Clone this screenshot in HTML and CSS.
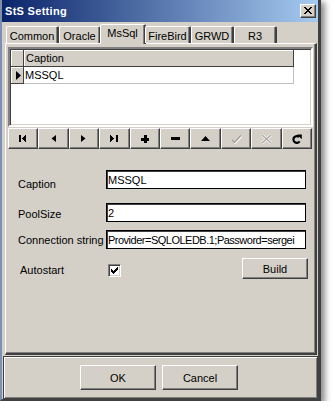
FILE: index.html
```html
<!DOCTYPE html>
<html>
<head>
<meta charset="utf-8">
<link rel="stylesheet" href="styles.css">
</head>
<body>
<div class="window">
  <div class="titlebar">
    <span class="title">StS Setting</span>
    <span class="close"><svg width="8" height="7" viewBox="0 0 8 7" shape-rendering="crispEdges"><path d="M0 0h2v1h-2zM6 0h2v1h-2zM1 1h2v1h-2zM5 1h2v1h-2zM2 2h4v1h-4zM3 3h2v1h-2zM2 4h4v1h-4zM1 5h2v1h-2zM5 5h2v1h-2zM0 6h2v1h-2zM6 6h2v1h-2z" fill="#000"/></svg></span>
  </div>
  <div class="client">
    <div class="tabs">
      <div class="tab t-common">Common</div>
      <div class="tab t-oracle">Oracle</div>
      <div class="tab t-mssql active">MsSql</div>
      <div class="tab t-fire">FireBird</div>
      <div class="tab t-grwd">GRWD</div>
      <div class="tab t-r3">R3</div>
    </div>
    <div class="panel">
      <div class="grid">
        <div class="grow head">
          <div class="ind"></div>
          <div class="cell">Caption</div>
        </div>
        <div class="grow data">
          <div class="ind"><svg width="5" height="9" viewBox="0 0 5 9"><polygon points="0,0 5,4.5 0,9" fill="#000"/></svg></div>
          <div class="cell">MSSQL</div>
        </div>
      </div>
      <div class="nav">
        <div class="nbtn"><svg width="8" height="7" viewBox="0 0 8 7" shape-rendering="crispEdges"><rect x="0" y="0" width="2" height="7"/><polygon points="7,0 7,7 3,3.5"/></svg></div>
        <div class="nbtn"><svg width="5" height="7" viewBox="0 0 5 7"><polygon points="5,0 5,7 0.5,3.5"/></svg></div>
        <div class="nbtn"><svg width="5" height="7" viewBox="0 0 5 7"><polygon points="0,0 0,7 4.5,3.5"/></svg></div>
        <div class="nbtn"><svg width="8" height="7" viewBox="0 0 8 7" shape-rendering="crispEdges"><polygon points="0,0 0,7 4,3.5"/><rect x="6" y="0" width="2" height="7"/></svg></div>
        <div class="nbtn"><svg width="8" height="8" viewBox="0 0 8 8" shape-rendering="crispEdges"><rect x="3" y="0" width="3" height="8"/><rect x="0" y="3" width="9" height="2.5"/></svg></div>
        <div class="nbtn"><svg width="9" height="3" viewBox="0 0 9 3" shape-rendering="crispEdges"><rect x="0" y="0" width="9" height="3"/></svg></div>
        <div class="nbtn"><svg width="9" height="5" viewBox="0 0 9 5"><polygon points="0,5 9,5 4.5,0"/></svg></div>
        <div class="nbtn dis"><svg width="12" height="10" viewBox="0 0 12 10"><path d="M2 6 L4.5 8.5 L11 1.5" fill="none" stroke="#fff" stroke-width="1.2" transform="translate(0.8 0.8)"/><path d="M2 6 L4.5 8.5 L11 1.5" fill="none" stroke="#9c9a94" stroke-width="1.2"/></svg></div>
        <div class="nbtn dis"><svg width="11" height="10" viewBox="0 0 11 10"><path d="M1 1 L10 9 M10 1 L1 9" fill="none" stroke="#fff" stroke-width="2.6"/><path d="M1 1 L10 9 M10 1 L1 9" fill="none" stroke="#a8a59e" stroke-width="1.4"/></svg></div>
        <div class="nbtn"><svg width="10" height="10" viewBox="0 0 10 10"><path d="M7.2 3 A3.4 3.4 0 1 0 7.6 7.4" fill="none" stroke="#000" stroke-width="2.2"/><polygon points="5,0.5 9.8,0.5 9.8,5.3" fill="#000"/></svg></div>
      </div>
      <div class="form">
        <div class="frow r1">
          <label class="lbl">Caption</label>
          <div class="edit">MSSQL</div>
        </div>
        <div class="frow r2">
          <label class="lbl">PoolSize</label>
          <div class="edit">2</div>
        </div>
        <div class="frow r3">
          <label class="lbl">Connection string</label>
          <div class="edit">Provider=SQLOLEDB.1;Password=sergei</div>
        </div>
        <div class="frow r4">
          <label class="lbl">Autostart</label>
          <div class="check"><svg width="7" height="7" viewBox="0 0 7 7" shape-rendering="crispEdges"><path d="M0 2h1v3h-1zM1 3h1v3h-1zM2 4h1v3h-1zM3 3h1v3h-1zM4 2h1v3h-1zM5 1h1v3h-1zM6 0h1v3h-1z" fill="#000"/></svg></div>
          <div class="btn build">Build</div>
        </div>
      </div>
    </div>
    <div class="bottom">
      <div class="btn dlg">OK</div>
      <div class="btn dlg">Cancel</div>
    </div>
  </div>
</div>
</body>
</html>
```

FILE: styles.css
```css
* { box-sizing: border-box; }
body {
  margin: 0;
  background: #fff;
  font: 11px "Liberation Sans", Arial, sans-serif;
  color: #000;
}
.window {
  width: 321px;
  height: 401px;
  background: #D4D0C8;
  border-style: solid;
  border-width: 0 3px 2px 2px;
  border-color: #D4D0C8 #404040 #404040 #7f8fb0;
  box-shadow: 3px 3px 6px 1px rgba(0,0,0,0.45);
  display: flex;
  flex-direction: column;
}
.titlebar {
  height: 22px;
  background: linear-gradient(to right, #0A246A, #A6CAF0);
  display: flex;
  align-items: center;
  justify-content: space-between;
  padding: 0 2px 1px 3px;
}
.title {
  color: #fff;
  font-weight: bold;
  font-size: 11px;
  letter-spacing: 0.3px;
}
.close {
  width: 16px;
  height: 14px;
  background: #D4D0C8;
  border: 1px solid;
  border-color: #fff #404040 #404040 #fff;
  box-shadow: inset -1px -1px 0 #808080;
  display: flex;
  align-items: center;
  justify-content: center;
}
.client {
  flex: 1;
  display: flex;
  flex-direction: column;
  padding-top: 2px;
}
.tabs {
  height: 19px;
  display: flex;
  align-items: flex-end;
  padding-left: 4px;
  position: relative;
  z-index: 1;
}
.tab {
  height: 17px;
  border-style: solid;
  border-width: 1px 2px 0 1px;
  border-color: #fff #404040 #404040 #fff;
  box-shadow: inset -1px 0 0 #808080;
  border-radius: 2px 2px 0 0;
  display: flex;
  align-items: center;
  justify-content: center;
  padding-top: 1px;
}
.t-common { width: 53px; }
.t-oracle { width: 42px; }
.t-mssql { width: 45px; }
.t-fire { width: 46px; }
.t-grwd { width: 43px; }
.t-r3 { width: 43px; }
.tab.active {
  height: 20px;
  margin-bottom: -1px;
  margin-left: -1px;
  margin-right: -1px;
  width: 46px;
  background: #D4D0C8;
  padding-top: 0;
  padding-bottom: 3px;
}
.panel {
  margin-left: 3px;
  width: 312px;
  height: 312px;
  border-style: solid;
  border-width: 1px 2px 2px 1px;
  border-color: #fff #404040 #404040 #fff;
  box-shadow: inset -1px -1px 0 #808080;
  padding: 3px 0 0 2px;
}
.grid {
  width: 305px;
  height: 80px;
  background: #fff;
  border-style: solid;
  border-width: 2px;
  border-color: #808080 #fff #fff #808080;
  box-shadow: inset 1px 1px 0 #404040, inset -1px -1px 0 #D4D0C8;
  padding: 1px 0 0 1px;
}
.grow {
  display: flex;
  height: 17px;
}
.ind {
  width: 13px;
  background: #D4D0C8;
  border-right: 1px solid #404040;
  border-bottom: 1px solid #404040;
  box-shadow: inset 1px 1px 0 #fff;
  display: flex;
  align-items: center;
  justify-content: center;
  padding-left: 2px;
}
.head .cell {
  width: 270px;
  background: #D4D0C8;
  border-right: 1px solid #404040;
  border-bottom: 1px solid #404040;
  box-shadow: inset 1px 1px 0 #fff;
  padding: 1px 0 0 2px;
  line-height: 15px;
}
.data .cell {
  width: 270px;
  border-right: 1px solid #c0c0c0;
  border-bottom: 1px solid #c0c0c0;
  padding: 1px 0 0 1px;
  line-height: 15px;
}
.nav {
  margin-top: 1px;
  width: 304px;
  height: 21px;
  display: grid;
  grid-template-columns: repeat(10, 1fr);
}
.nbtn {
  border-style: solid;
  border-width: 1px;
  border-color: #fff #404040 #404040 #fff;
  box-shadow: inset -1px -1px 0 #808080;
  display: flex;
  align-items: center;
  justify-content: center;
}
.nbtn svg { fill: #000; }
.form {
  margin-top: 21px;
  display: flex;
  flex-direction: column;
}
.frow {
  display: flex;
  align-items: flex-start;
}
.lbl {
  width: 98px;
  padding-left: 10px;
  line-height: 13px;
}
.edit {
  width: 200px;
  height: 19px;
  background: #fff;
  border: 1px solid #000;
  box-shadow: inset 1px 1px 0 #404040;
  padding: 2px 0 0 1px;
  line-height: 14px;
  white-space: nowrap;
  overflow: hidden;
}
.r1 .lbl { padding-top: 8px; }
.r2 { margin-top: 12px; }
.r2 .lbl { padding-top: 5px; }
.r3 { margin-top: 8px; }
.r3 .lbl { padding-top: 4px; }
.r3 .edit { letter-spacing: -0.5px; }
.r4 { margin-top: 9px; }
.r4 .lbl { padding-top: 6px; padding-left: 12px; width: 100px; }
.check {
  margin-top: 6px;
  width: 13px;
  height: 13px;
  background: #fff;
  border-style: solid;
  border-width: 1px;
  border-color: #808080 #fff #fff #808080;
  box-shadow: inset 1px 1px 0 #404040, inset -1px -1px 0 #D4D0C8;
  display: flex;
  align-items: center;
  justify-content: center;
}
.btn {
  background: #D4D0C8;
  border-style: solid;
  border-width: 1px;
  border-color: #fff #404040 #404040 #fff;
  box-shadow: inset -1px -1px 0 #808080;
  display: flex;
  align-items: center;
  justify-content: center;
}
.build {
  margin-left: 121px;
  width: 66px;
  height: 21px;
}
.bottom {
  margin-top: 1px;
  margin-left: 1px;
  width: 315px;
  height: 43px;
  border: 1px solid #404040;
  box-shadow: inset 1px 1px 0 #fff, inset -1px -1px 0 #808080;
  display: flex;
  align-items: flex-start;
  padding: 8px 0 0 76px;
  gap: 6px;
}
.dlg {
  width: 76px;
  height: 25px;
}
```
